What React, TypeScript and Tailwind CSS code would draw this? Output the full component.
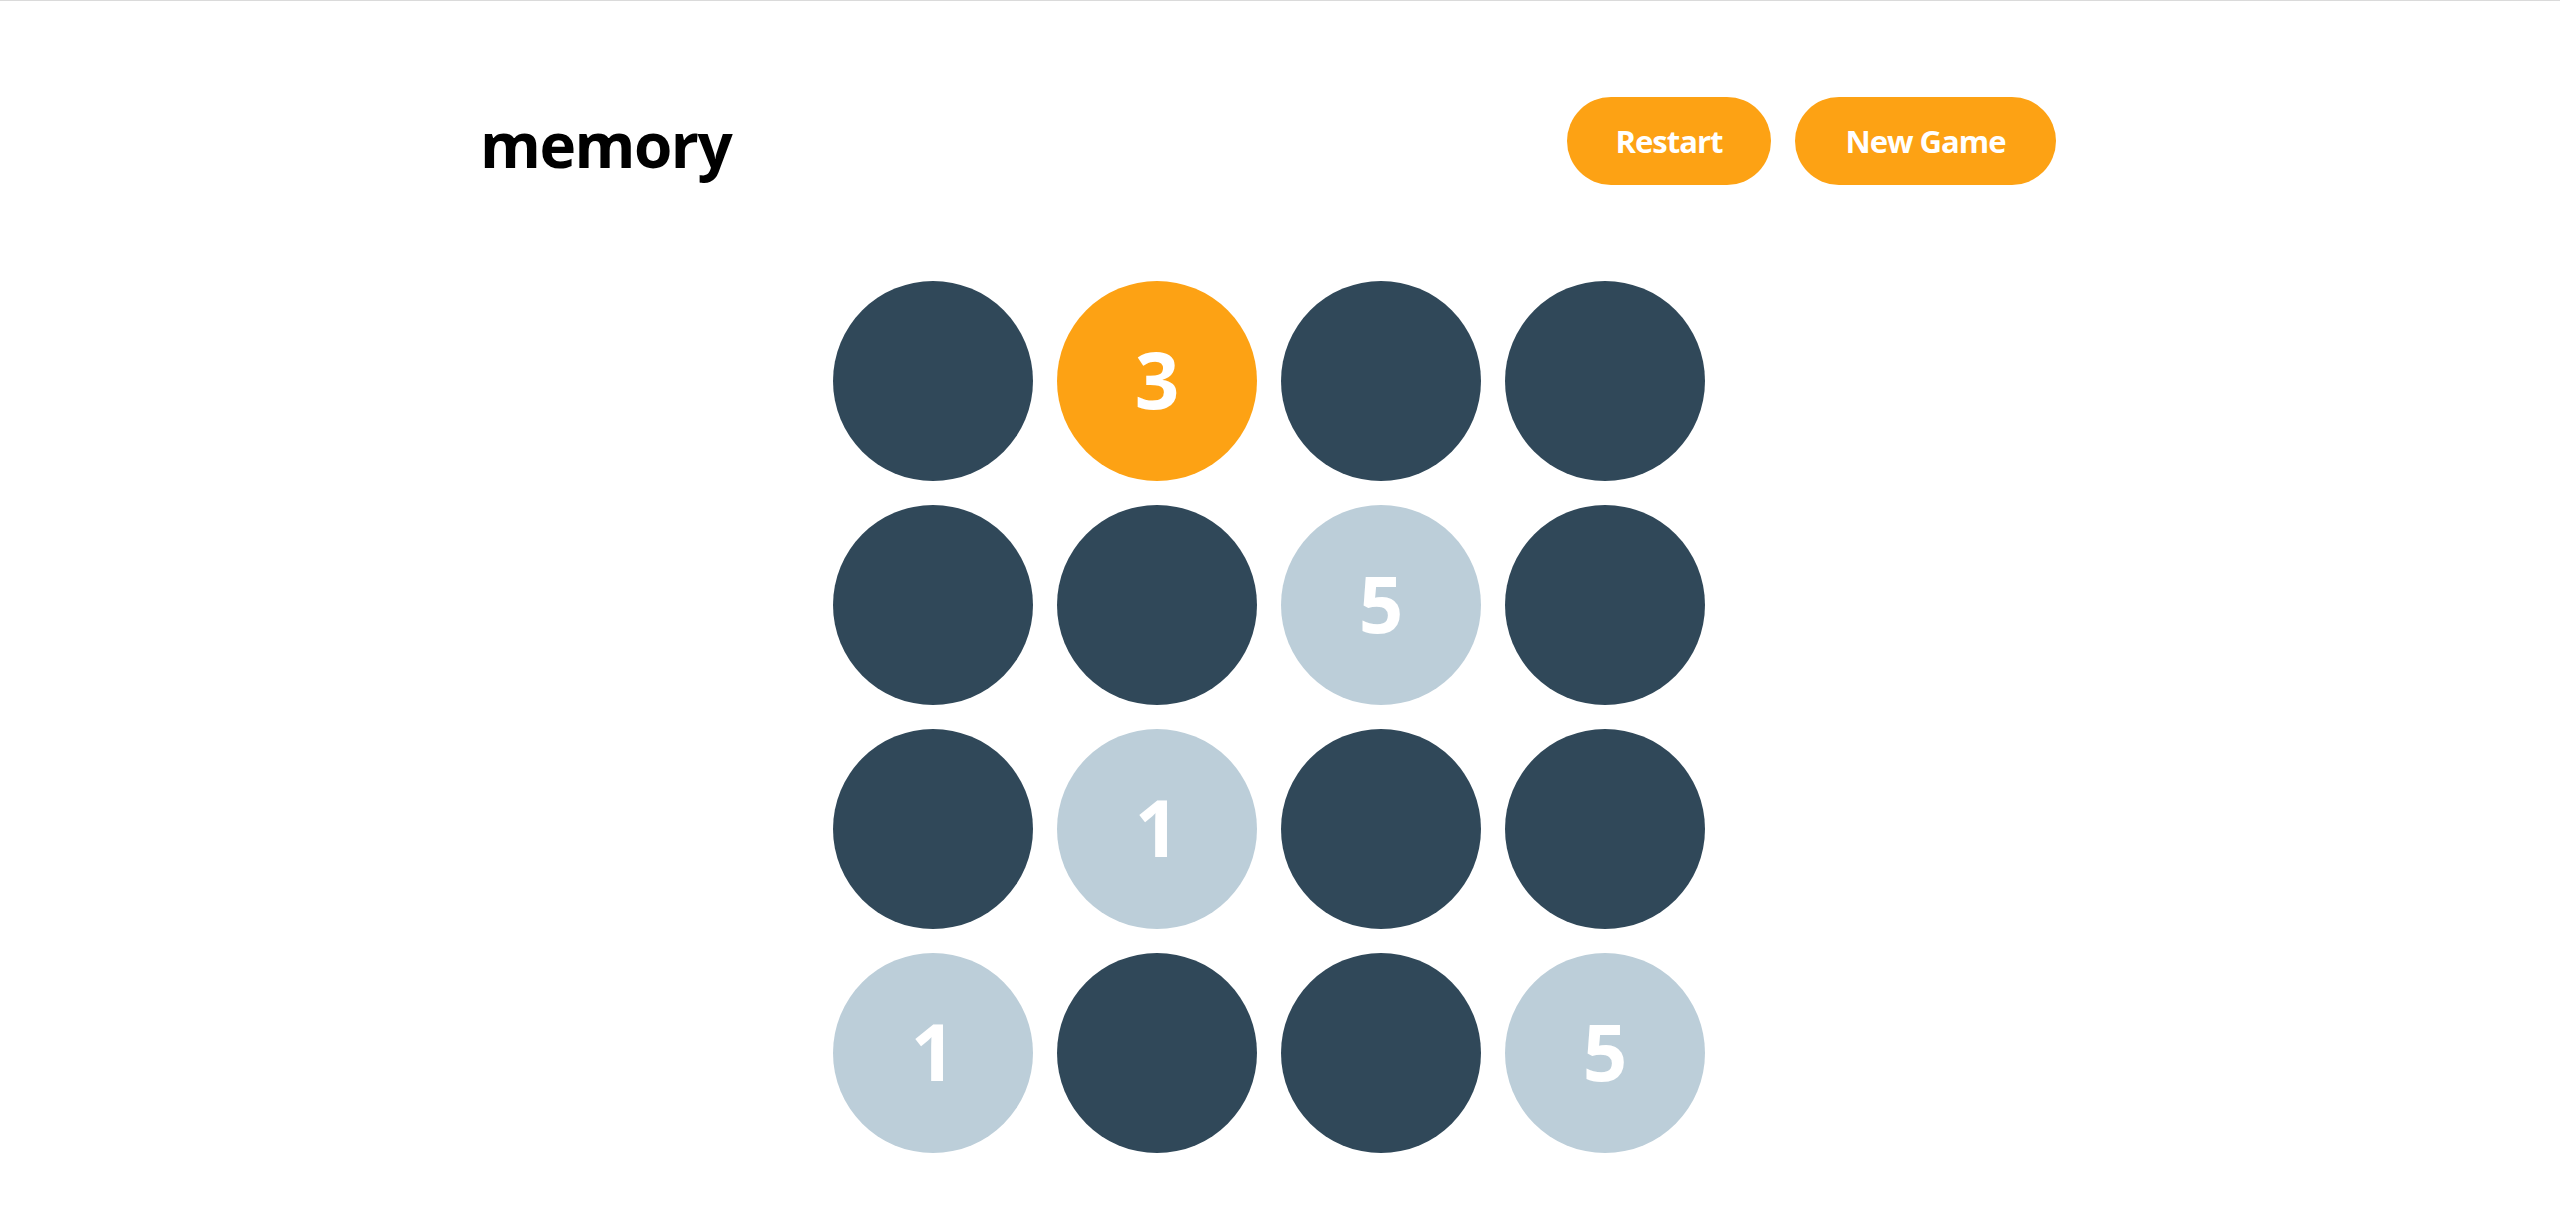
import React from "react";

type Tile = { state: "hidden" | "active" | "matched"; value?: number };

const BOARD: Tile[] = [
  { state: "hidden" },
  { state: "active", value: 3 },
  { state: "hidden" },
  { state: "hidden" },
  { state: "hidden" },
  { state: "hidden" },
  { state: "matched", value: 5 },
  { state: "hidden" },
  { state: "hidden" },
  { state: "matched", value: 1 },
  { state: "hidden" },
  { state: "hidden" },
  { state: "matched", value: 1 },
  { state: "hidden" },
  { state: "hidden" },
  { state: "matched", value: 5 },
];

function Cell({ tile }: { tile: Tile }) {
  const bg =
    tile.state === "active"
      ? "bg-[#fda214]"
      : tile.state === "matched"
        ? "bg-[#bcced9]"
        : "bg-[#304859]";

  return (
    <button
      className={`w-[200px] h-[200px] rounded-full flex items-center justify-center text-white font-bold text-[78px] leading-none ${bg}`}
    >
      {tile.state !== "hidden" && <span className="pb-[4px]">{tile.value}</span>}
    </button>
  );
}

export default function App() {
  return (
    <div
      className="min-h-[1480px] bg-white border-t border-[#dadada]"
      style={{ fontFamily: '"Open Sans", "Noto Sans", sans-serif' }}
    >
      {/* Header */}
      <header className="mt-[96px] ml-[480px] w-[1576px] h-[88px] flex items-center justify-between">
        <h1 className="text-[62px] font-bold text-black tracking-[-1.5px] leading-none pt-[6px]">
          memory
        </h1>
        <div className="flex items-center gap-[24px]">
          <button className="w-[204px] h-[88px] rounded-full bg-[#fda214] text-white text-[31px] font-bold tracking-[-1px]">
            Restart
          </button>
          <button className="w-[261px] h-[88px] rounded-full bg-[#fda214] text-white text-[31px] font-bold tracking-[-1px]">
            New Game
          </button>
        </div>
      </header>

      {/* Board */}
      <main className="mt-[96px] ml-[833px] w-[872px] grid grid-cols-4 gap-[24px]">
        {BOARD.map((tile, i) => (
          <Cell key={i} tile={tile} />
        ))}
      </main>
    </div>
  );
}
